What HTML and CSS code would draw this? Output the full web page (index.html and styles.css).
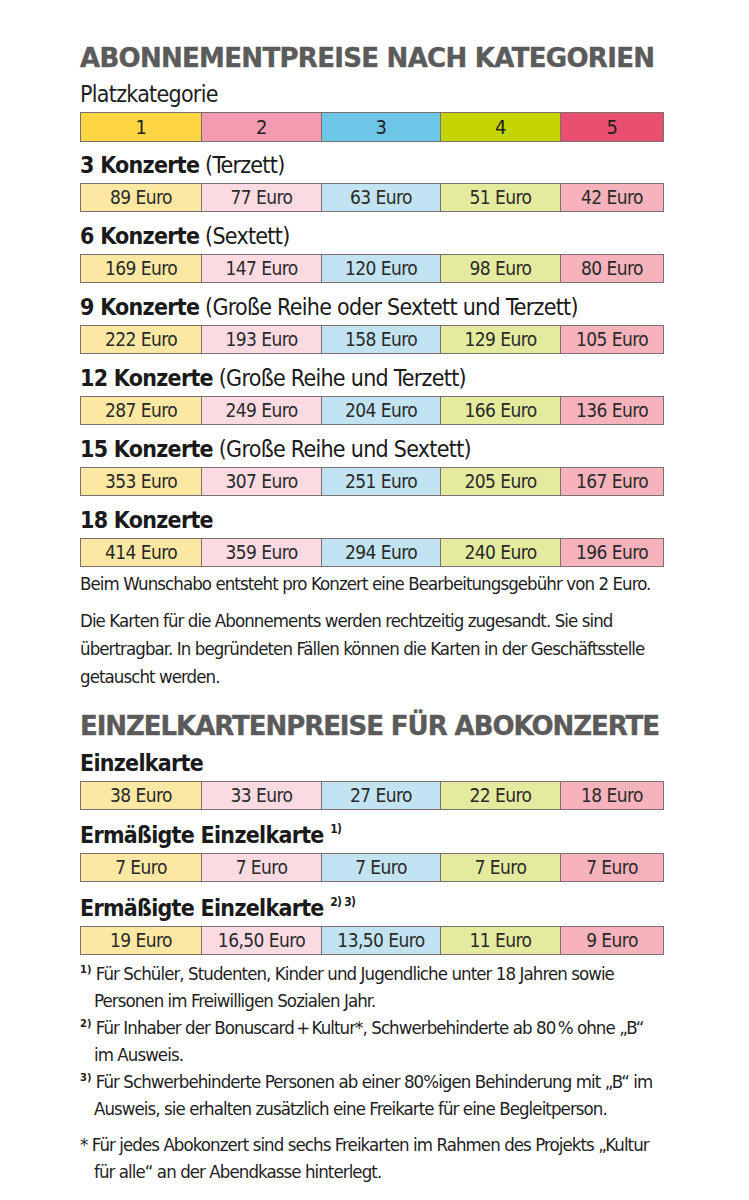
FILE: index.html
```html
<!DOCTYPE html>
<html lang="de">
<head>
<meta charset="utf-8">
<link rel="stylesheet" href="styles.css">
</head>
<body>
<main class="page">
  <h1 class="title">ABONNEMENTPREISE NACH KATEGORIEN</h1>
  <div class="label">Platzkategorie</div>
  <div class="bar cats">
    <div class="c1">1</div><div class="c2">2</div><div class="c3">3</div><div class="c4">4</div><div class="c5">5</div>
  </div>

  <div class="group">
    <div class="head"><b>3 Konzerte</b> (Terzett)</div>
    <div class="bar prices"><div class="p1">89 Euro</div><div class="p2">77 Euro</div><div class="p3">63 Euro</div><div class="p4">51 Euro</div><div class="p5">42 Euro</div></div>
  </div>
  <div class="group">
    <div class="head"><b>6 Konzerte</b> (Sextett)</div>
    <div class="bar prices"><div class="p1">169 Euro</div><div class="p2">147 Euro</div><div class="p3">120 Euro</div><div class="p4">98 Euro</div><div class="p5">80 Euro</div></div>
  </div>
  <div class="group">
    <div class="head"><b>9 Konzerte</b> (Große Reihe oder Sextett und Terzett)</div>
    <div class="bar prices"><div class="p1">222 Euro</div><div class="p2">193 Euro</div><div class="p3">158 Euro</div><div class="p4">129 Euro</div><div class="p5">105 Euro</div></div>
  </div>
  <div class="group">
    <div class="head"><b>12 Konzerte</b> (Große Reihe und Terzett)</div>
    <div class="bar prices"><div class="p1">287 Euro</div><div class="p2">249 Euro</div><div class="p3">204 Euro</div><div class="p4">166 Euro</div><div class="p5">136 Euro</div></div>
  </div>
  <div class="group">
    <div class="head"><b>15 Konzerte</b> (Große Reihe und Sextett)</div>
    <div class="bar prices"><div class="p1">353 Euro</div><div class="p2">307 Euro</div><div class="p3">251 Euro</div><div class="p4">205 Euro</div><div class="p5">167 Euro</div></div>
  </div>
  <div class="group">
    <div class="head"><b>18 Konzerte</b></div>
    <div class="bar prices"><div class="p1">414 Euro</div><div class="p2">359 Euro</div><div class="p3">294 Euro</div><div class="p4">240 Euro</div><div class="p5">196 Euro</div></div>
  </div>
  <p class="note">Beim Wunschabo entsteht pro Konzert eine Bearbeitungsgebühr von 2 Euro.</p>
  <p class="text">Die Karten für die Abonnements werden rechtzeitig zugesandt. Sie sind übertragbar. In begründeten Fällen können die Karten in der Geschäftsstelle getauscht werden.</p>

  <h1 class="title second">EINZELKARTENPREISE FÜR ABOKONZERTE</h1>
  <div class="group first">
    <div class="head"><b>Einzelkarte</b></div>
    <div class="bar prices"><div class="p1">38 Euro</div><div class="p2">33 Euro</div><div class="p3">27 Euro</div><div class="p4">22 Euro</div><div class="p5">18 Euro</div></div>
  </div>
  <div class="group single">
    <div class="head"><b>Ermäßigte Einzelkarte <sup>1)</sup></b></div>
    <div class="bar prices"><div class="p1">7 Euro</div><div class="p2">7 Euro</div><div class="p3">7 Euro</div><div class="p4">7 Euro</div><div class="p5">7 Euro</div></div>
  </div>
  <div class="group single last">
    <div class="head"><b>Ermäßigte Einzelkarte <sup>2) 3)</sup></b></div>
    <div class="bar prices"><div class="p1">19 Euro</div><div class="p2">16,50 Euro</div><div class="p3">13,50 Euro</div><div class="p4">11 Euro</div><div class="p5">9 Euro</div></div>
  </div>

  <div class="footnotes">
    <p class="fn"><sup>1)</sup> Für Schüler, Studenten, Kinder und Jugendliche unter 18 Jahren sowie Personen im Freiwilligen Sozialen Jahr.</p>
    <p class="fn"><sup>2)</sup> Für Inhaber der Bonuscard&thinsp;+&thinsp;Kultur*, Schwerbehinderte ab 80&thinsp;% ohne „B“ im Ausweis.</p>
    <p class="fn"><sup>3)</sup> Für Schwerbehinderte Personen ab einer 80%igen Behinderung mit „B“ im Ausweis, sie erhalten zusätzlich eine Freikarte für eine Begleitperson.</p>
    <p class="fn star">* Für jedes Abokonzert sind sechs Freikarten im Rahmen des Projekts „Kultur für alle“ an der Abendkasse hinterlegt.</p>
  </div>
</main>
</body>
</html>
```

FILE: styles.css
```css
html, body {
  margin: 0;
  padding: 0;
  background: #ffffff;
}

.page {
  width: 584px;
  padding: 41px 0 0 80px;
  font-family: "DejaVu Sans Condensed", "Liberation Sans", sans-serif;
  font-stretch: condensed;
  letter-spacing: -0.045em;
  color: #1e1e1e;
}

.title {
  margin: 0;
  font-family: "DejaVu Sans", "Liberation Sans", sans-serif;
  font-stretch: normal;
  font-weight: 900;
  font-size: 26px;
  line-height: 34px;
  color: #5b5b5b;
  letter-spacing: -0.7px;
  white-space: nowrap;
  -webkit-text-stroke: 0.4px #5b5b5b;
}

.title.second {
  margin-top: 18px;
  letter-spacing: -1.05px;
}

.label {
  font-size: 23px;
  line-height: 36px;
  margin-top: 1px;
}

.bar {
  display: grid;
  grid-template-columns: 120px 120px 119px 120px 1fr;
  border: 1px solid #7d6f6f;
  box-sizing: border-box;
  width: 584px;
  letter-spacing: -0.03em;
}

.bar > div {
  text-align: center;
  border-left: 1px solid #7d6f6f;
}

.bar > div:first-child {
  border-left: none;
}

.cats {
  height: 30px;
  font-size: 20px;
  line-height: 28px;
}

.c1 { background: #fcd743; }
.c2 { background: #f29bb1; }
.c3 { background: #6ec6e6; }
.c4 { background: #c4d400; }
.c5 { background: #e9506f; }

.prices {
  height: 29px;
  font-size: 19px;
  line-height: 27px;
  color: #2a2a2a;
}

.p1 { background: #fde8a3; }
.p2 { background: #fbdae2; }
.p3 { background: #c2e3f1; }
.p4 { background: #e4eb9e; }
.p5 { background: #f6b3bb; }

.group {
  margin-top: 6px;
}

.page > .bar + .group {
  margin-top: 5px;
}

.group.first {
  margin-top: 2px;
}

.group.single {
  margin-top: 7px;
}

.group.last {
  margin-top: 8px;
}

.head {
  font-size: 23px;
  line-height: 36px;
  color: #1a1a1a;
}

.head b {
  font-weight: 700;
}

.head sup {
  font-size: 12px;
  vertical-align: 10px;
  line-height: 0;
}

.note,
.text,
.fn {
  font-size: 18.5px;
  letter-spacing: -0.05em;
}

.note {
  margin: 2px 0 0;
  line-height: 30px;
}

.text {
  margin: 8px 0 0;
  line-height: 28px;
}

.footnotes {
  margin-top: 5px;
}

.fn {
  margin: 0;
  line-height: 27px;
  padding-left: 14px;
  text-indent: -14px;
}

.fn sup {
  font-size: 11px;
  font-weight: 700;
  vertical-align: 7px;
  line-height: 0;
  letter-spacing: 0;
}

.fn.star {
  margin-top: 9px;
}
```
